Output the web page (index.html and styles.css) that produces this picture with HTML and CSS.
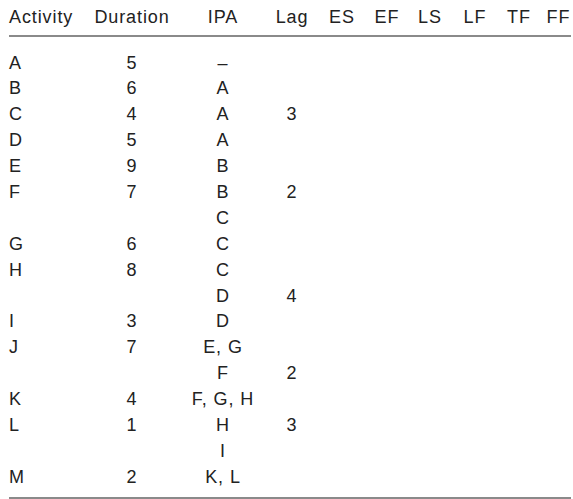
FILE: index.html
```html
<!DOCTYPE html>
<html lang="en">
<head>
<meta charset="utf-8">
<title>Activity table</title>
<link rel="stylesheet" href="styles.css">
</head>
<body>
<div class="table">
  <div class="row head">
    <span class="left">Activity</span><span>Duration</span><span>IPA</span><span>Lag</span><span>ES</span><span>EF</span><span>LS</span><span>LF</span><span>TF</span><span>FF</span>
  </div>
  <div class="body">
    <div class="row"><span class="left">A</span><span>5</span><span>–</span><span></span></div>
    <div class="row"><span class="left">B</span><span>6</span><span>A</span><span></span></div>
    <div class="row"><span class="left">C</span><span>4</span><span>A</span><span>3</span></div>
    <div class="row"><span class="left">D</span><span>5</span><span>A</span><span></span></div>
    <div class="row"><span class="left">E</span><span>9</span><span>B</span><span></span></div>
    <div class="row"><span class="left">F</span><span>7</span><span>B</span><span>2</span></div>
    <div class="row"><span class="left"></span><span></span><span>C</span><span></span></div>
    <div class="row"><span class="left">G</span><span>6</span><span>C</span><span></span></div>
    <div class="row"><span class="left">H</span><span>8</span><span>C</span><span></span></div>
    <div class="row"><span class="left"></span><span></span><span>D</span><span>4</span></div>
    <div class="row"><span class="left">I</span><span>3</span><span>D</span><span></span></div>
    <div class="row"><span class="left">J</span><span>7</span><span>E, G</span><span></span></div>
    <div class="row"><span class="left"></span><span></span><span>F</span><span>2</span></div>
    <div class="row"><span class="left">K</span><span>4</span><span>F, G, H</span><span></span></div>
    <div class="row"><span class="left">L</span><span>1</span><span>H</span><span>3</span></div>
    <div class="row"><span class="left"></span><span></span><span>I</span><span></span></div>
    <div class="row"><span class="left">M</span><span>2</span><span>K, L</span><span></span></div>
  </div>
</div>
</body>
</html>
```

FILE: styles.css
```css
html, body {
  margin: 0;
  padding: 0;
  background: #ffffff;
}

body {
  font-family: "Liberation Sans", Arial, sans-serif;
  font-size: 18px;
  letter-spacing: 0.9px;
  color: #222222;
}

.table {
  width: 562px;
  margin-left: 9px;
  padding-top: 4px;
}

.row {
  display: grid;
  grid-template-columns: 81px 84px 98px 40px 60px 30px 56px 34px 54px 25px;
  height: 25.9px;
  line-height: 26px;
  white-space: nowrap;
}

.row span {
  text-align: center;
}

.row .left {
  text-align: left;
}

.head {
  height: 26px;
  padding-bottom: 5px;
  border-bottom: 2px solid #8a8a8a;
}

.body {
  padding-top: 12.5px;
  padding-bottom: 7.5px;
  border-bottom: 2px solid #8a8a8a;
}
```
